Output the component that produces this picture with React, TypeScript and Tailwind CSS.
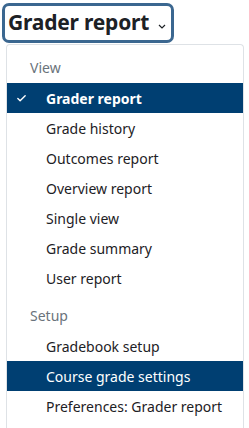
import { Check } from "lucide-react";

const viewItems = [
  "Grader report",
  "Grade history",
  "Outcomes report",
  "Overview report",
  "Single view",
  "Grade summary",
  "User report",
];

const setupItems = ["Gradebook setup", "Course grade settings", "Preferences: Grader report"];

function Item({ label, active, checked }: { label: string; active?: boolean; checked?: boolean }) {
  return (
    <div
      className={`relative flex h-[30px] items-center pl-[39px] text-[14px] ${
        active ? "bg-[#003f72] text-white" : "text-[#1d2125]"
      } ${checked ? "font-bold" : ""}`}
    >
      {checked && (
        <Check className="absolute left-[9px] top-[10px] h-[11px] w-[11px]" strokeWidth={3} />
      )}
      {label}
    </div>
  );
}

function Header({ label }: { label: string }) {
  return (
    <div className="flex h-[38px] items-center pl-[23px] pt-[6px] text-[14px] text-[#6a737b]">
      {label}
    </div>
  );
}

export default function App() {
  return (
    <div
      className="h-[428px] w-[249px] overflow-hidden bg-white"
      style={{ fontFamily: '"Noto Sans", "Open Sans", sans-serif' }}
    >
      <div className="ml-[2px] mt-[3px] flex h-[40px] w-[172px] items-center rounded-[7px] border-[3px] border-[#3b6790] pl-[3px]">
        <span className="text-[21px] font-bold tracking-[-0.2px] text-[#1d2125]">Grader report</span>
        <svg className="ml-[9px] mt-[6px]" width="8" height="5" viewBox="0 0 8 5" fill="none">
          <path d="M1 1l3 3 3-3" stroke="#1d2125" strokeWidth="1.2" />
        </svg>
      </div>
      <div className="ml-[6px] mt-[1px] w-[238px] rounded-t-[4px] border border-b-0 border-[#dee2e6]">
        <Header label="View" />
        {viewItems.map((l, i) => (
          <Item key={l} label={l} active={i === 0} checked={i === 0} />
        ))}
        <Header label="Setup" />
        {setupItems.map((l, i) => (
          <Item key={l} label={l} active={i === 1} />
        ))}
        <div className="h-[30px]" />
      </div>
    </div>
  );
}
